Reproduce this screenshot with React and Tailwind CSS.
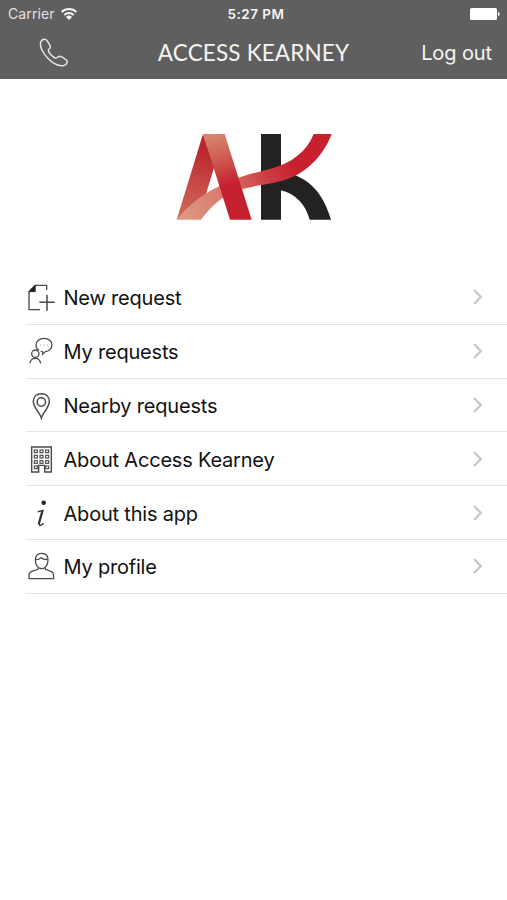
const iconProps = {
  viewBox: '0 0 90 90',
  fill: 'none',
  stroke: '#4a4a4c',
  strokeWidth: 3.6,
  className: 'w-[30px] h-[30px] shrink-0',
};

function NewRequestIcon() {
  return (
    <svg {...iconProps}>
      <path d="M62 24V10H28L9 29V83H42" strokeWidth="4" />
      <path d="M8 29L28 9V29Z" fill="#222" stroke="#222" strokeWidth="2" />
      <path d="M63 38V86M40 61H86" strokeWidth="4.5" />
    </svg>
  );
}

function MyRequestsIcon() {
  return (
    <svg {...iconProps} strokeWidth="3.8">
      <path d="M39 43C33 40 30 34 30 28C30 16 40 7 54 7C68 7 78 16 78 27C78 38 69 46 58 47L50 55V47L44 46" />
      <path d="M42 27H46M52 27H56M62 27H66" stroke="#aaa" strokeWidth="3" />
      <circle cx="28" cy="53" r="11" fill="#fff" />
      <path d="M12 82C13 72 19 67 28 67C37 67 42 72 44 82" />
    </svg>
  );
}

function PinIcon() {
  return (
    <svg {...iconProps} strokeWidth="4.5">
      <path d="M46 84C42 69 22 51 22 35C22 20 32 11 46 11C60 11 70 20 70 35C70 51 50 69 46 84Z" />
      <circle cx="46" cy="36" r="12.5" />
    </svg>
  );
}

function BuildingIcon() {
  const cols = [26, 43, 60];
  const rows = [18, 34, 50, 66];
  return (
    <svg {...iconProps}>
      <path d="M17 9H76V84H56V64H38V84H17Z" strokeWidth="4.2" />
      {rows.map((y, r) =>
        cols.map((x, c) =>
          r === 3 && c === 1 ? null : (
            <rect key={`${x}-${y}`} x={x - 1} y={y} width="9" height="8" strokeWidth="3.4" />
          )
        )
      )}
    </svg>
  );
}

function InfoIcon() {
  return (
    <svg {...iconProps}>
      <circle cx="53" cy="14" r="6.8" fill="#222" stroke="none" />
      <path d="M35 42C41 40 46 38 51 37L40 74C38 84 43 86 53 76" stroke="#333" strokeWidth="4" />
      <path d="M49 39L38 79" stroke="#333" strokeWidth="6.5" />
    </svg>
  );
}

function ProfileIcon() {
  return (
    <svg {...iconProps} strokeWidth="3.8">
      <path d="M28 27C28 13 36 7 47 7C58 7 66 13 66 27C66 42 58 53 47 53C36 53 28 42 28 27Z" />
      <path d="M29 26C37 27 41 24 45 20C50 25 58 26 65 26" />
      <path d="M36 50V55L17 61C11 63 9 68 9 74V83H83V74C83 68 81 63 75 61L58 55V50" />
    </svg>
  );
}

function Logo() {
  return (
    <svg viewBox="0 0 540 330" className="w-[180px] h-[110px]">
      <defs>
        <linearGradient id="leftLeg" x1="130" y1="90" x2="50" y2="290" gradientUnits="userSpaceOnUse">
          <stop offset="0" stopColor="#b9262c" />
          <stop offset="0.5" stopColor="#c74a45" />
          <stop offset="1" stopColor="#d0685b" />
        </linearGradient>
        <linearGradient id="rightLeg" x1="145" y1="45" x2="215" y2="300" gradientUnits="userSpaceOnUse">
          <stop offset="0" stopColor="#d98370" />
          <stop offset="0.3" stopColor="#cf5850" />
          <stop offset="0.6" stopColor="#c4202d" />
          <stop offset="1" stopColor="#c8202f" />
        </linearGradient>
        <linearGradient id="swoosh" x1="40" y1="290" x2="470" y2="60" gradientUnits="userSpaceOnUse">
          <stop offset="0" stopColor="#dc9a86" />
          <stop offset="0.32" stopColor="#d9796b" />
          <stop offset="0.6" stopColor="#cc3d40" />
          <stop offset="0.78" stopColor="#c8202f" />
          <stop offset="1" stopColor="#c8202f" />
        </linearGradient>
      </defs>
      <path d="M288 42H348V299H288Z" fill="#242122" />
      <path d="M340 168L390 165C448 190 478 232 498 299H434C422 254 391 220 347 211Z" fill="#242122" />
      <path d="M114 42L148 140L123 222L35 299Z" fill="url(#leftLeg)" />
      <path
        d="M35 299C70 256 112 222 168 196C225 167 275 158 315 147C378 130 425 96 446 42H500C474 110 425 156 368 177C325 193 270 194 220 211C170 228 139 259 108 299Z"
        fill="url(#swoosh)"
      />
      <path d="M114 42H179L260 299H195Z" fill="url(#rightLeg)" />
    </svg>
  );
}

const menuItems = [
  { label: 'New request', Icon: NewRequestIcon },
  { label: 'My requests', Icon: MyRequestsIcon },
  { label: 'Nearby requests', Icon: PinIcon },
  { label: 'About Access Kearney', Icon: BuildingIcon },
  { label: 'About this app', Icon: InfoIcon },
  { label: 'My profile', Icon: ProfileIcon },
];

function MenuRow({ label, Icon }) {
  return (
    <li className="flex items-center h-[53.8px] border-b border-[#e4e4e6] pr-[24px]">
      <Icon />
      <span className="ml-[7.5px] flex-1 pt-[2px] text-[20px] tracking-[-0.2px] leading-6 text-[#111]">{label}</span>
      <svg viewBox="0 0 11 16" className="w-[11px] h-4" fill="none" stroke="#c4c4c8" strokeWidth="2">
        <path d="M2 1L9 8L2 15" />
      </svg>
    </li>
  );
}

export default function App() {
  return (
    <div className="h-[900px] w-full bg-white font-['Inter',sans-serif] overflow-hidden">
      <header className="h-[79px] bg-[#5f5f5f] text-[#f4f4f4]">
        <div className="grid grid-cols-3 items-center h-[27px] pl-[8px] pr-[7px]">
          <div className="flex items-center gap-[6px] text-[#e2e2e2]">
            <span className="text-[14px] leading-5 tracking-[0.1px]">Carrier</span>
            <svg viewBox="0 0 48 36" className="w-4 h-3" fill="none" stroke="#f2f2f2" strokeWidth="5.5">
              <path d="M2 12C14 0 34 0 46 12" />
              <path d="M10 21C18 13 30 13 38 21" />
              <path d="M24 36L15 27C20 21 28 21 33 27Z" fill="#f2f2f2" stroke="none" />
            </svg>
          </div>
          <span className="pl-1 text-center text-[13.5px] leading-5 font-semibold tracking-[0.5px]">5:27 PM</span>
          <svg viewBox="0 0 30 12" className="w-[30px] h-3 justify-self-end" fill="#fff">
            <rect x="0" y="0" width="27" height="12" rx="1.5" />
            <path d="M28 4C30.3 4.5 30.3 7.5 28 8Z" />
          </svg>
        </div>
        <div className="grid grid-cols-[1fr_auto_1fr] items-center h-[51px] px-[15px]">
          <svg viewBox="0 0 90 90" className="ml-[24px] w-[30px] h-[30px]" fill="none" stroke="#e6e6e6" strokeWidth="4.4">
            <path d="M7 9C11 3 20 2 24 8C28 14 34 22 34 27C34 32 28 33 28 38C29 45 41 56 48 60C54 62 56 55 62 55C68 56 76 61 82 66C88 72 82 80 76 82C65 87 44 79 28 62C10 44 -1 22 7 9Z" />
          </svg>
          <h1 className="font-['Lato',sans-serif] text-[22.5px] leading-7 tracking-[0.15px]">ACCESS KEARNEY</h1>
          <button className="justify-self-end text-[20px] leading-7 tracking-[-0.1px]">Log out</button>
        </div>
      </header>
      <main>
        <div className="flex justify-center pt-[41px] pb-[41px] pl-[2px]">
          <Logo />
        </div>
        <ul className="pl-[26px]">
          {menuItems.map((item) => (
            <MenuRow key={item.label} {...item} />
          ))}
        </ul>
      </main>
    </div>
  );
}
